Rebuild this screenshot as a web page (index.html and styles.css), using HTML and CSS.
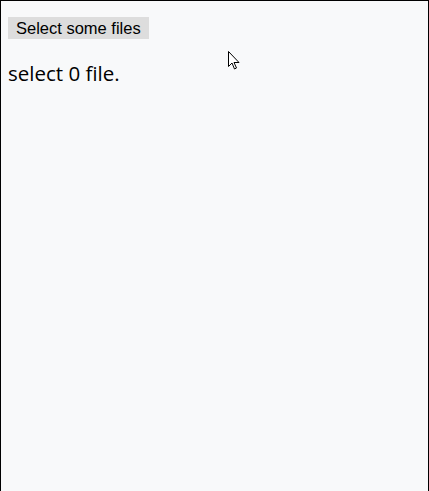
FILE: index.html
```html
<!DOCTYPE html>
<html>
<head>
<meta charset="utf-8">
<link rel="stylesheet" href="styles.css">
</head>
<body>
<div class="frame">
  <button class="pick">Select some files</button>
  <p class="status">select 0 file.</p>
  <svg class="cursor" width="13" height="20" viewBox="0 0 13 20"><path d="M0.5 0.5 L0.5 15.5 L4 12 L6.5 18 L8.5 17 L6 11.5 L11 11.5 Z" fill="#fff" stroke="#000" stroke-width="1"/></svg>
</div>
</body>
</html>
```
FILE: styles.css
```css
html, body {
  margin: 0;
  padding: 0;
  background: #f8f9fa;
}
.frame {
  position: relative;
  box-sizing: border-box;
  height: 491px;
  border: 1px solid #000;
  border-bottom: none;
  padding: 16px 7px 0;
}
.pick {
  display: block;
  height: 22px;
  margin: 0;
  padding: 0 8px;
  border: none;
  background: #dddddd;
  color: #000;
  font-family: "Liberation Sans", Arial, sans-serif;
  font-size: 16.5px;
  line-height: 22px;
}
.status {
  margin: 22px 0 0;
  font-family: "Open Sans", sans-serif;
  font-size: 20.5px;
  line-height: 24px;
  color: #000;
}
.cursor {
  position: absolute;
  left: 227px;
  top: 50px;
}
```
